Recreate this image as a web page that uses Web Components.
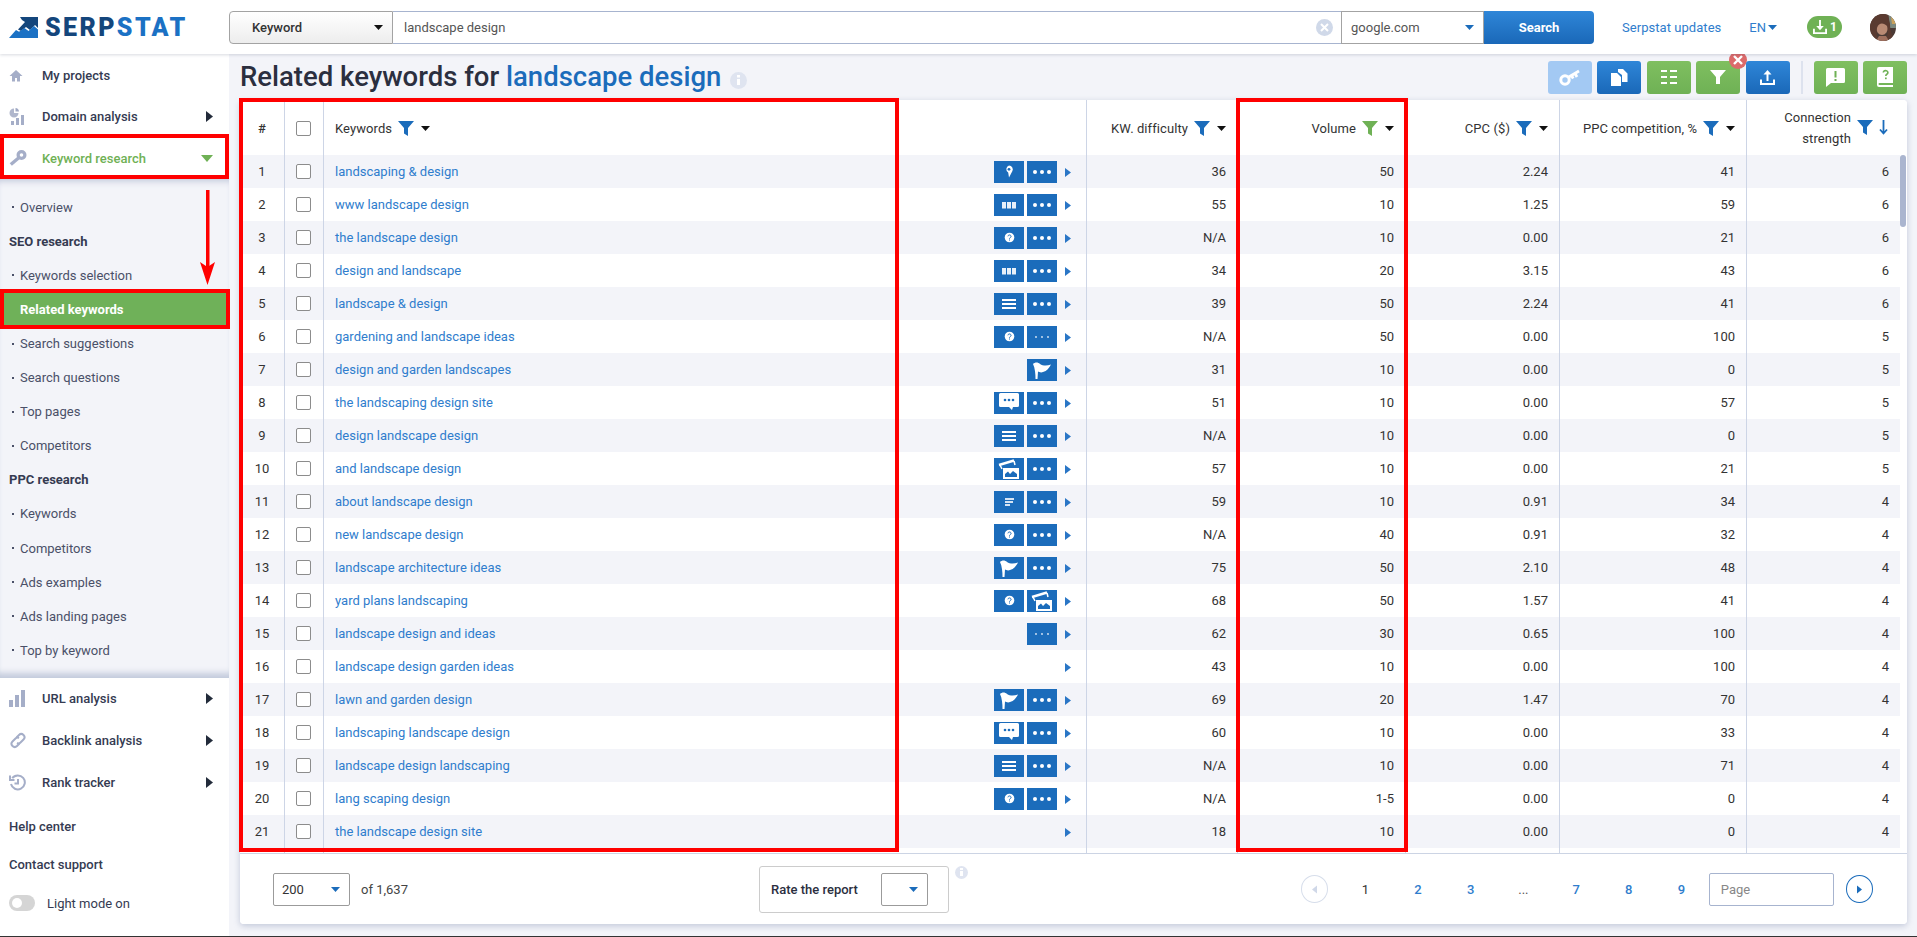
<!DOCTYPE html>
<html lang="en">
<head>
<meta charset="utf-8">
<title>Serpstat - Related keywords</title>
<style>
html,body{margin:0;padding:0;height:937px;width:1917px;overflow:hidden;background:#fff;font-family:Roboto,"Liberation Sans",sans-serif;}
sp-app{display:block}
</style>
</head>
<body>
<sp-app></sp-app>
<script>
const ICONS={
 caret:'<svg width="9" height="5" viewBox="0 0 9 5"><path d="M0 0h9L4.5 5z" fill="currentColor"/></svg>',
 caretR:'<svg width="7" height="11" viewBox="0 0 7 11"><path d="M0 0l7 5.5L0 11z" fill="currentColor"/></svg>',
 funnel:'<svg width="16" height="15" viewBox="0 0 16 15"><path d="M0 0h16L10 7v8L6 12.5V7z" fill="currentColor"/></svg>',
 home:'<svg width="14" height="13" viewBox="0 0 14 13"><path d="M7 1L0.5 7H3v5.500h3V9h2v3.500h3V7h2.500z" fill="#a5aec8"/></svg>',
 domain:'<svg width="16" height="17" viewBox="0 0 16 17"><path d="M5 0.500a4.500 4.500 0 1 0 4.500 4.500H5z" fill="#b0b7cd"/><path d="M6.500 0a4 4 0 0 1 3.500 3.500H6.500z" fill="#a0a9c4"/><rect x="2" y="13" width="3" height="4" fill="#a5aec8"/><rect x="7" y="10" width="3" height="7" fill="#a5aec8"/><rect x="12" y="7" width="3" height="10" fill="#a5aec8"/></svg>',
 key:'<svg width="18" height="16" viewBox="0 0 18 16" fill="none" stroke="#a5aec8"><circle cx="12.500" cy="5" r="3.400" stroke-width="3.200"/><path d="M9.500 8L1.800 14.500" stroke-width="3.400"/></svg>',
 url:'<svg width="16" height="17" viewBox="0 0 16 17"><rect x="0" y="10" width="4" height="7" fill="#a5aec8"/><rect x="6" y="5" width="4" height="12" fill="#a5aec8"/><rect x="12" y="0" width="4" height="17" fill="#a5aec8"/></svg>',
 link:'<svg width="18" height="17" viewBox="0 0 18 17" fill="none" stroke="#a5aec8" stroke-width="2"><path d="M7.500 5.500L10 3a3.200 3.200 0 0 1 4.500 0 3.200 3.200 0 0 1 0 4.500L11.500 10.500a3 3 0 0 1-3.500.5"/><path d="M10.500 11.500L8 14a3.200 3.200 0 0 1-4.500 0 3.200 3.200 0 0 1 0-4.500L6.500 6.500a3 3 0 0 1 3.500-.5"/></svg>',
 hist:'<svg width="17" height="17" viewBox="0 0 17 17" fill="none" stroke="#a5aec8" stroke-width="2"><path d="M3.200 4.200A7 7 0 1 1 2 10"/><path d="M1 1.500v4.500h4.500" /><path d="M9 5v4.500H5.500"/></svg>',
 pin:'<svg width="30" height="22" viewBox="0 0 30 22"><path d="M15 4.500a3.800 3.800 0 0 1 3.300 5.700L15 16.500l-.8-5.100A3.800 3.800 0 0 1 15 4.500z" fill="#fff"/><circle cx="15" cy="8.300" r="1.400" fill="#1b6cbb"/></svg>',
 bars:'<svg width="30" height="22" viewBox="0 0 30 22"><g fill="#e8f0f9"><rect x="8" y="8" width="4" height="6.500"/><rect x="13" y="8" width="4" height="6.500"/><rect x="18" y="8" width="4" height="6.500"/></g></svg>',
 q:'<svg width="30" height="22" viewBox="0 0 30 22"><circle cx="15.500" cy="10.500" r="4.800" fill="#fff"/><path d="M13.900 9.300a1.600 1.400 0 1 1 2.400 1.300c-.6.300-.8.600-.8 1.100" fill="none" stroke="#1b6cbb" stroke-width="1"/><rect x="15" y="12.500" width="1" height="1" fill="#1b6cbb"/></svg>',
 lines:'<svg width="30" height="22" viewBox="0 0 30 22"><g fill="#fff"><rect x="8" y="6" width="14" height="2"/><rect x="8" y="10" width="14" height="2"/><rect x="8" y="14" width="14" height="2"/></g></svg>',
 dots:'<svg width="30" height="22" viewBox="0 0 30 22"><g fill="#fff"><circle cx="8" cy="11" r="2"/><circle cx="15" cy="11" r="2"/><circle cx="22" cy="11" r="2"/></g></svg>',
 thin:'<svg width="30" height="22" viewBox="0 0 30 22"><g fill="#dfeaf6"><circle cx="9" cy="11" r=".9"/><circle cx="15" cy="11" r=".9"/><circle cx="21" cy="11" r=".9"/></g></svg>',
 flag:'<svg width="30" height="22" viewBox="0 0 30 22"><path d="M6 5C8 3 11 3 13 5c3 2 7 2 11 .5C22 9 20 12 16 13c-2 1-4 0-5-.5L10.500 20H8.500C8.500 15 8 9 6 5z" fill="#fff"/></svg>',
 chat:'<svg width="30" height="22" viewBox="0 0 30 22"><path d="M6.500 1h17a1.500 1.500 0 0 1 1.500 1.500v11a1.500 1.500 0 0 1-1.500 1.500H19l-1 3-3-3H6.500A1.500 1.500 0 0 1 5 13.500v-11A1.500 1.500 0 0 1 6.500 1z" fill="#fff"/><g fill="#1b6cbb"><circle cx="11" cy="8" r="1.300"/><circle cx="15" cy="8" r="1.300"/><circle cx="19" cy="8" r="1.300"/></g></svg>',
 images:'<svg width="30" height="22" viewBox="0 0 30 22"><path d="M5 7L20 2.500" stroke="#fff" stroke-width="2.400" fill="none"/><path d="M6 7l2 4M20 3l1 4" stroke="#fff" stroke-width="1.500" fill="none"/><rect x="9" y="10" width="16" height="11" fill="#fff"/><path d="M11 19v-3l3-2.500 2 2.500 3-3 4 3v3z" fill="#1b6cbb"/></svg>',
 snip:'<svg width="30" height="22" viewBox="0 0 30 22"><g fill="#d5e4f4"><rect x="11" y="7" width="9" height="2"/><rect x="11" y="10" width="8" height="2"/><rect x="11" y="13" width="5" height="2"/></g></svg>',
 tkey:'<svg width="21" height="17" viewBox="0 0 21 17" fill="none" stroke="#fff"><circle cx="6" cy="11" r="4.200" stroke-width="3"/><path d="M9 8.500L20 2M16 4.500l2 3.500M12.500 6.500l1.700 3" stroke-width="2.800"/></svg>',
 tcopy:'<svg width="17" height="17" viewBox="0 0 17 17" fill="#fff"><path d="M7 0h5l4.500 4.500V13H11V6L7 3z"/><path d="M0 4h6l4 4v9H0z"/></svg>',
 tlist:'<svg width="16" height="14" viewBox="0 0 16 14" fill="#fff"><rect x="0" y="0" width="6" height="2"/><rect x="9" y="0" width="7" height="2"/><rect x="0" y="6" width="6" height="2"/><rect x="9" y="6" width="7" height="2"/><rect x="0" y="12" width="6" height="2"/><rect x="9" y="12" width="7" height="2"/></svg>',
 tfun:'<svg width="16" height="14" viewBox="0 0 16 14"><path d="M0 0h16L10 7v7H6V7z" fill="#fff"/></svg>',
 tup:'<svg width="15" height="15" viewBox="0 0 15 15" fill="none" stroke="#fff" stroke-width="2"><path d="M1 9.500V14h13V9.500"/><path d="M7.500 11V3"/><path d="M7.500 0l4 4.500h-8z" fill="#fff" stroke="none"/></svg>',
 tmsg:'<svg width="19" height="19" viewBox="0 0 19 19"><path d="M1.500 0h16A1.500 1.500 0 0 1 19 1.500v12a1.500 1.500 0 0 1-1.500 1.500H5L0 19V1.500A1.500 1.500 0 0 1 1.500 0z" fill="#fff"/><rect x="8.500" y="3" width="2" height="6.500" fill="#6fb155"/><rect x="8.500" y="11" width="2" height="2" fill="#6fb155"/></svg>',
 tbook:'<svg width="16" height="20" viewBox="0 0 16 20"><path d="M2 0h14v16H2.500a1 1 0 0 0 0 2H16v2H2a2 2 0 0 1-2-2V2a2 2 0 0 1 2-2z" fill="#fff"/><path d="M6.300 5.500a2.300 2 0 1 1 3.500 1.800c-.8.500-1 .9-1 1.700" fill="none" stroke="#6fb155" stroke-width="1.600"/><rect x="8" y="10.500" width="1.700" height="1.700" fill="#6fb155"/></svg>'
};

function def(name,css,html,init){
  customElements.define(name,class extends HTMLElement{
    connectedCallback(){
      if(this.shadowRoot)return;
      const s=this.attachShadow({mode:'open'});
      s.innerHTML='<style>'+css+'</style>'+(typeof html==='function'?html(this):html);
      if(init)init(this,s);
    }
  });
}
const BLUE='#1b6cbb';

def('sp-logo',`:host{display:flex;align-items:center;gap:7px;width:180px;padding-left:9px;box-sizing:border-box}
.t{font:900 25px/1 Roboto,"Liberation Sans",sans-serif;letter-spacing:2.400px;color:#14467c;white-space:nowrap}
.t b{font-weight:900;color:#1b71c4}`,
`<svg width="29" height="21" viewBox="0 0 29 21"><path d="M11 0h18v11l-3-3-5 5-4-3-5 4-3-1.500 7-7.500-3-2z" fill="#14467c"/><path d="M0 21l7-8 3 1.800 5.500-3.800 4 3 5.500-5 4 3.500V21z" fill="#1b71c4"/></svg><span class="t">SERP<b>STAT</b></span>`);

def('sp-search',`:host{display:flex;height:33px;width:1365px;font-size:13px;color:#444;box-sizing:border-box}
*{box-sizing:border-box}
.k{width:164px;border:1px solid #a3a3a3;border-radius:4px 0 0 4px;background:linear-gradient(#fff,#ededed);display:flex;align-items:center;justify-content:space-between;padding:0 9px 0 22px;font-weight:500;color:#333}
.k svg{color:#111}
.i{flex:1;border-top:1px solid #a7b4cf;border-bottom:1px solid #a7b4cf;display:flex;align-items:center;justify-content:space-between;padding:0 8px 0 11px;color:#555}
.c{width:17px;height:17px;border-radius:50%;background:#d0d9e9;display:flex;align-items:center;justify-content:center}
.g{width:143px;border:1px solid #a3a3a3;display:flex;align-items:center;justify-content:space-between;padding:0 9px;color:#555}
.g svg{color:${BLUE}}
.b{width:110px;border-radius:0 4px 4px 0;background:linear-gradient(#2f86d8,#1a68b8);color:#fff;font-weight:700;display:flex;align-items:center;justify-content:center}
`,`<div class="k">Keyword ${ICONS.caret}</div>
<div class="i"><span>landscape design</span><span class="c"><svg width="9" height="9" viewBox="0 0 9 9"><path d="M1 1l7 7M8 1L1 8" stroke="#fff" stroke-width="2"/></svg></span></div>
<div class="g">google.com ${ICONS.caret}</div><div class="b">Search</div>`);

def('sp-header',`:host{display:flex;align-items:center;height:54px;background:#fff;box-shadow:0 1px 3px rgba(60,70,100,.2);position:relative;z-index:3;font-size:13px}
.u{margin-left:28px;color:#2f7dcd;white-space:nowrap;letter-spacing:.05px}
.e{margin-left:28px;color:#2f7dcd;display:flex;align-items:center;gap:2px;width:30px}
.e svg{color:${BLUE}}
.p{margin-left:28px;width:35px;height:22px;border-radius:11px;background:#6fb155;color:#fff;display:flex;align-items:center;justify-content:center;gap:3px;font-weight:700;font-size:12px}
.a{margin-left:28px;width:26px;height:27px;border-radius:50%;overflow:hidden}
`,`<sp-logo style="width:229px"></sp-logo><sp-search></sp-search><span class="u">Serpstat updates</span><span class="e">EN ${ICONS.caret}</span>
<span class="p"><svg width="14" height="14" viewBox="0 0 15 15" fill="none" stroke="#fff" stroke-width="2"><path d="M1 9.500V14h13V9.500"/><path d="M7.500 0v7"/><path d="M7.500 11l-4-4.500h8z" fill="#fff" stroke="none"/></svg>1</span>
<span class="a"><svg width="26" height="27" viewBox="0 0 26 27"><rect width="26" height="27" fill="#4b3a35"/><path d="M18 0h8v14h-6z" fill="#7d8a80"/><path d="M21 3h5v7h-4z" fill="#c9a15c"/><ellipse cx="12" cy="13" rx="6" ry="8" fill="#b98a74"/><path d="M5 0h13l2 10c0 6 2 10 4 17H14c3-3 5-8 3-15C14 9 9 8 7 14c-1 5 0 9 1 13H0V8z" fill="#5a3a30"/><path d="M9 22h7l3 5H6z" fill="#a0705e"/></svg></span>`);

def('sp-nav',`:host{display:flex;align-items:center;height:var(--h,42px);font-size:13px;font-weight:500;color:#353b52;padding-left:9px;padding-right:16px;box-sizing:border-box;background:#fff}
.ic{width:33px;height:18px;display:flex;align-items:center;flex:none}
.l{flex:1}
:host([active]) .l{color:#6fb155}
.ar{color:#222b3a;display:flex}
:host([active]) .ar{color:#6fb155}
`,h=>{const ic=ICONS[h.getAttribute('icon')]||'';const a=h.hasAttribute('active');const no=h.hasAttribute('noar');
return `<span class="ic">${ic}</span><span class="l"><slot></slot></span>`+(no?'':`<span class="ar">${a?'<svg width="12" height="7" viewBox="0 0 12 7"><path d="M0 0h12L6 7z" fill="currentColor"/></svg>':ICONS.caretR}</span>`)});

def('sp-sub',`:host{display:flex;align-items:center;height:34.100px;font-size:13px;color:#4a5068;padding-left:12px;box-sizing:border-box;white-space:nowrap}
.d{width:2px;height:2px;background:#4a5068;margin-right:6px}
:host([head]){padding-left:9px;font-weight:700;color:#353b52}
:host([head]) .d{display:none}
:host([on]){background:#6fb159;color:#fff;font-weight:700;padding-left:20px}
:host([on]) .d{display:none}`,`<span class="d"></span><slot></slot>`);

def('sp-plain',`:host{display:flex;align-items:center;font-size:13px;font-weight:500;color:#353b52;padding-left:9px;box-sizing:border-box;background:#fff;height:38px}
.t{width:26px;height:16px;border-radius:8px;background:#d5d5d5;position:relative;margin-right:12px;display:none}
.t:after{content:"";position:absolute;left:3px;top:3px;width:10px;height:10px;border-radius:50%;background:#fff}
:host([toggle]) .t{display:block}
:host([toggle]){font-weight:400;color:#353b52;height:40px}`,`<span class="t"></span><slot></slot>`);

def('sp-sidebar',`:host{display:flex;flex-direction:column;width:229px;flex:none;background:#fff;height:883px}
.sub{height:499px;background:#f3f4f9;box-shadow:inset 0 8px 7px -6px #bfc7da,inset 0 -9px 6px -4px #c3cadc;display:flex;flex-direction:column;padding-top:11.100px;box-sizing:border-box}
.gap{height:4px}`,`
<sp-nav icon="home" noar style="--h:42px">My projects</sp-nav>
<sp-nav icon="domain" style="--h:41px">Domain analysis</sp-nav>
<sp-nav icon="key" active style="--h:42px">Keyword research</sp-nav>
<div class="sub">
<sp-sub>Overview</sp-sub><sp-sub head>SEO research</sp-sub><sp-sub>Keywords selection</sp-sub><sp-sub on>Related keywords</sp-sub><sp-sub>Search suggestions</sp-sub><sp-sub>Search questions</sp-sub><sp-sub>Top pages</sp-sub><sp-sub>Competitors</sp-sub><sp-sub head>PPC research</sp-sub><sp-sub>Keywords</sp-sub><sp-sub>Competitors</sp-sub><sp-sub>Ads examples</sp-sub><sp-sub>Ads landing pages</sp-sub><sp-sub>Top by keyword</sp-sub>
</div>
<sp-nav icon="url" style="--h:41px">URL analysis</sp-nav>
<sp-nav icon="link" style="--h:42px">Backlink analysis</sp-nav>
<sp-nav icon="hist" style="--h:42px">Rank tracker</sp-nav>
<div class="gap"></div>
<sp-plain>Help center</sp-plain><sp-plain>Contact support</sp-plain><sp-plain toggle>Light mode on</sp-plain>`);

def('sp-tb',`:host{display:flex;align-items:center;justify-content:center;width:44px;height:33px;border-radius:3px;background:linear-gradient(#2f86d8,#1a68b8);position:relative}
:host([c=g]){background:linear-gradient(#7fbf60,#6fb155)}
:host([c=l]){background:#a3c9f3}
.x{position:absolute;right:-7px;top:-10px;width:18px;height:18px;border-radius:50%;background:#dc6a6a;display:none;align-items:center;justify-content:center}
:host([x]) .x{display:flex}`,h=>`${ICONS[h.getAttribute('i')]}<span class="x"><svg width="10" height="10" viewBox="0 0 10 10"><path d="M1 1l8 8M9 1L1 9" stroke="#fff" stroke-width="2.400"/></svg></span>`);

def('sp-title',`:host{display:flex;align-items:center;height:46px;padding-right:10px;box-sizing:border-box}
h1{margin:0 0 0 11px;font:500 27.500px/1 Roboto,sans-serif;color:#2b2f3f;white-space:nowrap}
h1 span{color:${BLUE}}
.inf{width:17px;height:17px;border-radius:50%;background:#dfe4f0;margin:6px 0 0 9px;color:#fff;display:flex;align-items:center;justify-content:center}
.r{margin-left:auto;display:flex;align-items:center;gap:5.500px}
.dv{width:2px;height:33px;background:#dde2ee;margin:0 5px 0 6px}`,
`<h1>Related keywords for <span>landscape design</span></h1><span class="inf"><svg width="3" height="10" viewBox="0 0 3 10" fill="#fff"><rect width="3" height="2.500"/><rect y="4" width="3" height="6"/></svg></span>
<div class="r"><sp-tb c="l" i="tkey"></sp-tb><sp-tb i="tcopy"></sp-tb><sp-tb c="g" i="tlist"></sp-tb><sp-tb c="g" i="tfun" x></sp-tb><sp-tb i="tup"></sp-tb><span class="dv"></span><sp-tb c="g" i="tmsg"></sp-tb><sp-tb c="g" i="tbook"></sp-tb></div>`);

const COLS='45px 39px 763px 151px 168px 154px 187px 153px';
def('sp-th',`:host{display:flex;align-items:center;justify-content:flex-end;gap:6px;padding:2px 11px 0 0;border-right:1px solid #cdd5e6;font-size:13px;color:#333;box-sizing:border-box;height:55px;text-align:right;line-height:21px;letter-spacing:.08px}
:host([last]){border-right:0;padding:0 12px 0 0}
:host([left]){justify-content:flex-start;padding-left:11px}
.f{color:${BLUE};display:flex}
:host([green]) .f{color:#6fb155}
.c{color:#111;display:flex;margin-left:1px}
.dn{color:${BLUE};display:flex}`,h=>`<span><slot></slot></span><span class="f">${ICONS.funnel}</span>`+(h.hasAttribute('down')?`<span class="dn"><svg width="9" height="15" viewBox="0 0 9 15"><path d="M4.500 0v13M1 9.500l3.500 4 3.500-4" fill="none" stroke="currentColor" stroke-width="1.800"/></svg></span>`:`<span class="c">${ICONS.caret}</span>`));

def('sp-cb',`:host{display:block;width:15px;height:15px;border:1px solid #8c8c8c;border-radius:2px;background:#fff;box-sizing:border-box;margin-right:2px}`,'');

def('sp-thead',`:host{display:grid;grid-template-columns:${COLS};height:55px;background:#fff;border-radius:4px 4px 0 0}
.h{display:flex;align-items:center;justify-content:center;border-right:1px solid #cdd5e6;font-size:13px;color:#333;font-weight:500;padding-top:1px}`,
`<div class="h">#</div><div class="h"><sp-cb></sp-cb></div><sp-th left>Keywords</sp-th><sp-th>KW. difficulty</sp-th><sp-th green>Volume</sp-th><sp-th>CPC ($)</sp-th><sp-th>PPC competition, %</sp-th><sp-th last down>Connection<br>strength</sp-th>`);

def('sp-row',`:host{display:grid;grid-template-columns:${COLS};height:33px;background:#fff;font-size:13px;color:#333}
:host(:nth-child(odd)){background:#f3f4f9}
div{display:flex;align-items:center;box-sizing:border-box;border-right:1px solid #cdd5e6;justify-content:flex-end;padding-right:11px}
div:last-child{border-right:0;padding-right:11px}
.n{justify-content:center;padding:0}
.cb{justify-content:center;padding:0}
.kw{justify-content:space-between;padding:0 0 0 11px}
.kw a{color:#2f7dcd;text-decoration:none}
.ic{display:flex;gap:3px;align-items:center;margin-left:auto}
.ib{width:30px;height:22px;background:${BLUE};display:block;line-height:0}
.ar{color:#2a76c6;width:29px;display:flex;justify-content:flex-end;padding-right:15px;box-sizing:border-box;margin-top:2px}
`,h=>{const a=(h.getAttribute('d')||'').split('|');
if(!a[0])return `<div></div><div></div><div></div><div></div><div></div><div></div><div></div><div></div>`;
const ic=(a[2]||'').split(',').filter(Boolean).map(x=>`<span class="ib">${ICONS[x]}</span>`).join('');
return `<div class="n">${a[0]}</div><div class="cb"><sp-cb></sp-cb></div><div class="kw"><a href="#">${a[1]}</a><span class="ic">${ic}</span><span class="ar"><svg width="6" height="9" viewBox="0 0 6 9"><path d="M0 0l6 4.500L0 9z" fill="currentColor"/></svg></span></div><div>${a[3]}</div><div>${a[4]}</div><div>${a[5]}</div><div>${a[6]}</div><div>${a[7]}</div>`});

const ROWS=[
['landscaping & design','pin,dots','36','50','2.24','41','6'],
['www landscape design','bars,dots','55','10','1.25','59','6'],
['the landscape design','q,dots','N/A','10','0.00','21','6'],
['design and landscape','bars,dots','34','20','3.15','43','6'],
['landscape & design','lines,dots','39','50','2.24','41','6'],
['gardening and landscape ideas','q,thin','N/A','50','0.00','100','5'],
['design and garden landscapes','flag','31','10','0.00','0','5'],
['the landscaping design site','chat,dots','51','10','0.00','57','5'],
['design landscape design','lines,dots','N/A','10','0.00','0','5'],
['and landscape design','images,dots','57','10','0.00','21','5'],
['about landscape design','snip,dots','59','10','0.91','34','4'],
['new landscape design','q,dots','N/A','40','0.91','32','4'],
['landscape architecture ideas','flag,dots','75','50','2.10','48','4'],
['yard plans landscaping','q,images','68','50','1.57','41','4'],
['landscape design and ideas','thin','62','30','0.65','100','4'],
['landscape design garden ideas','','43','10','0.00','100','4'],
['lawn and garden design','flag,dots','69','20','1.47','70','4'],
['landscaping landscape design','chat,dots','60','10','0.00','33','4'],
['landscape design landscaping','lines,dots','N/A','10','0.00','71','4'],
['lang scaping design','q,dots','N/A','1-5','0.00','0','4'],
['the landscape design site','','18','10','0.00','0','4']];

def('sp-tbody',`:host{display:flex;height:698px;overflow:hidden;background:#fff}
.rows{width:1660px;flex:none}
.sb{flex:1;position:relative}
.th{width:6px;height:72px;background:#aab5cf;border-radius:3px}`,
()=>`<div class="rows">${ROWS.map((r,i)=>`<sp-row d="${i+1}|${r[0].replace(/&/g,'&amp;')}|${r[1]}|${r.slice(2).join('|')}"></sp-row>`).join('')}<sp-row></sp-row></div><div class="sb"><div class="th"></div></div>`);

def('sp-drop',`:host{display:flex;align-items:center;height:33px;border:1px solid #9b9b9b;border-radius:2px;box-sizing:border-box;padding:0 9px 0 8px;font-size:13px;color:#333;background:#fff}
span{color:${BLUE};display:flex;margin-left:auto}`,`<slot></slot><span>${ICONS.caret}</span>`);

def('sp-pager',`:host{display:flex;align-items:center;font-size:13px;font-weight:500}
.ci{width:27px;height:28px;border-radius:50%;border:1px solid ${BLUE};box-sizing:border-box;display:flex;align-items:center;justify-content:center;color:${BLUE}}
.ci.off{border-color:#d7deeb;color:#d0d8e8}
.ci svg{width:5px;height:9px}
.n{width:52.700px;text-align:center;color:#2f7dcd}
.n.cur{color:#333;font-weight:400}.n.el{color:#555;font-weight:400}
.first{margin-left:11px}
.pg{width:125px;height:33px;border:1px solid #a7b4cf;border-radius:2px;box-sizing:border-box;padding:0 11px;display:flex;align-items:center;color:#888;font-weight:400;margin-left:1px}
.next{margin-left:12px}`,
`<span class="ci off"><svg viewBox="0 0 7 11" style="transform:scaleX(-1)"><path d="M0 0l7 5.500L0 11z" fill="currentColor"/></svg></span><span class="n cur first">1</span><span class="n">2</span><span class="n">3</span><span class="n el">...</span><span class="n">7</span><span class="n">8</span><span class="n">9</span><span class="pg">Page</span><span class="ci next"><svg viewBox="0 0 7 11"><path d="M0 0l7 5.500L0 11z" fill="currentColor"/></svg></span>`);

def('sp-footer',`:host{display:grid;grid-template-columns:519px 542px 1fr;align-items:center;height:71px;background:#fff;border-top:1px solid #ccd4e4;box-sizing:border-box;font-size:13px;color:#444;border-radius:0 0 4px 4px}
.l{display:flex;align-items:center;padding-left:33px;gap:11px}
.l sp-drop{width:77px}
.rate{display:flex;align-items:flex-start}
.box{width:190px;height:47px;border:1px solid #ccc;border-radius:3px;box-sizing:border-box;display:flex;align-items:center;justify-content:space-between;padding:0 20px 0 11px;font-weight:500;color:#2b2f3f}
.box sp-drop{width:47px}
.inf{width:13px;height:13px;border-radius:50%;background:#dfe4f0;margin-left:6px;display:flex;align-items:center;justify-content:center}
`,`<div class="l"><sp-drop>200</sp-drop><span>of 1,637</span></div>
<div class="rate"><div class="box">Rate the report<sp-drop></sp-drop></div><span class="inf"><svg width="3" height="8" viewBox="0 0 3 8" fill="#fff"><rect width="3" height="2"/><rect y="3" width="3" height="5"/></svg></span></div>
<sp-pager></sp-pager>`);

def('sp-card',`:host{display:block;margin:0 10px 0 11px;background:#fff;border-radius:4px;box-shadow:0 2px 6px rgba(120,135,170,.4)}`,`<sp-thead></sp-thead><sp-tbody></sp-tbody><sp-footer></sp-footer>`);

def('sp-main',`:host{display:block;flex:1;background:#f3f4f9;min-width:0}`,`<sp-title></sp-title><sp-card></sp-card>`);

def('red-box',`:host{position:absolute;box-sizing:border-box;border:4px solid #f00;pointer-events:none;z-index:5}`,'');
def('red-arrow',`:host{position:absolute;left:200px;top:190px;z-index:5;line-height:0}`,`<svg width="16" height="96" viewBox="0 0 16 96"><rect x="6" y="0" width="3.500" height="80" fill="#f00"/><path d="M0 72l7.500 5L15 72 7.500 95z" fill="#f00"/></svg>`);

def('sp-app',`:host{display:block;position:relative;width:1917px;height:937px;overflow:hidden;background:#f3f4f9}
.b{display:flex}
.end{position:absolute;left:0;right:0;bottom:0;height:1px;background:#333;z-index:6}`,
`<sp-header></sp-header><div class="b"><sp-sidebar></sp-sidebar><sp-main></sp-main></div>
<red-box style="left:0;top:134px;width:229px;height:45px"></red-box>
<red-box style="left:0;top:289px;width:230px;height:40px"></red-box>
<red-arrow></red-arrow>
<red-box style="left:239px;top:98px;width:660px;height:754px"></red-box>
<red-box style="left:1236px;top:98px;width:172px;height:754px"></red-box>
<div class="end"></div>`);
</script>
</body>
</html>
